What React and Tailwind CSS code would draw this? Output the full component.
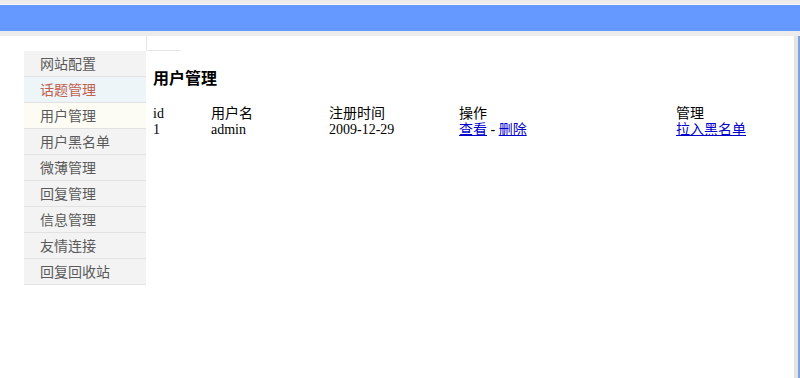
import React from 'react';

const menu = [
    { label: '网站配置', tone: 'bg-[#f3f3f3] text-[#5a5a5a]' },
    { label: '话题管理', tone: 'bg-[#eef5f8] text-[#c0604f]' },
    { label: '用户管理', tone: 'bg-[#fcfcf5] text-[#5a5a5a]' },
    { label: '用户黑名单', tone: 'bg-[#f3f3f3] text-[#5a5a5a]' },
    { label: '微薄管理', tone: 'bg-[#f3f3f3] text-[#5a5a5a]' },
    { label: '回复管理', tone: 'bg-[#f3f3f3] text-[#5a5a5a]' },
    { label: '信息管理', tone: 'bg-[#f3f3f3] text-[#5a5a5a]' },
    { label: '友情连接', tone: 'bg-[#f3f3f3] text-[#5a5a5a]' },
    { label: '回复回收站', tone: 'bg-[#f3f3f3] text-[#5a5a5a]' },
];

const users = [{ id: 1, name: 'admin', date: '2009-12-29' }];

export default function App() {
    return (
        <div className="w-[800px] h-[378px] flex flex-col bg-[#ececec] overflow-hidden font-['Liberation_Serif','Noto_Sans_CJK_SC',serif]">
            {/* top bar */}
            <div className="h-[5px] border-b border-[#f6f6f6] shrink-0" />
            <div className="h-[26px] bg-[#6699ff] shrink-0" />
            <div className="h-[5px] shrink-0" />

            <div className="flex-1 flex">
                <div className="w-[794px] bg-white flex items-start">
                    {/* side menu */}
                    <div className="w-[24px] shrink-0" />
                    <ul className="w-[122px] mt-[15px] shrink-0 font-['Noto_Sans_CJK_SC',sans-serif] text-[14px]">
                        {menu.map((m) => (
                            <li key={m.label} className={`h-[26px] pl-[16px] flex items-center border-b border-[#e2e2e2] ${m.tone}`}>
                                {m.label}
                            </li>
                        ))}
                    </ul>

                    {/* main */}
                    <div className="flex-1 flex flex-col">
                        <div className="h-[15px] w-[35px] border-l border-b border-[#e6e6e6]" />
                        <div className="pl-[7px]">
                            <h2 className="mt-[18px] text-[16px] font-bold text-black leading-[20px]">用户管理</h2>
                            <table className="mt-[17px] text-[14px] text-black leading-[16px] border-collapse">
                                <thead>
                                    <tr className="text-left">
                                        <th className="font-normal w-[58px] p-0">id</th>
                                        <th className="font-normal w-[118px] p-0">用户名</th>
                                        <th className="font-normal w-[130px] p-0">注册时间</th>
                                        <th className="font-normal w-[217px] p-0">操作</th>
                                        <th className="font-normal p-0">管理</th>
                                    </tr>
                                </thead>
                                <tbody>
                                    {users.map((u) => (
                                        <tr key={u.id}>
                                            <td className="p-0">{u.id}</td>
                                            <td className="p-0">{u.name}</td>
                                            <td className="p-0">{u.date}</td>
                                            <td className="p-0">
                                                <a href="#" className="text-[#0000cc] underline">查看</a> - <a href="#" className="text-[#0000cc] underline">删除</a>
                                            </td>
                                            <td className="p-0">
                                                <a href="#" className="text-[#0000cc] underline">拉入黑名单</a>
                                            </td>
                                        </tr>
                                    ))}
                                </tbody>
                            </table>
                        </div>
                    </div>
                </div>
                <div className="w-[4px] bg-[#e4e4e4]" />
                <div className="w-[2px] bg-[#7fa3e0]" />
            </div>
        </div>
    );
}
